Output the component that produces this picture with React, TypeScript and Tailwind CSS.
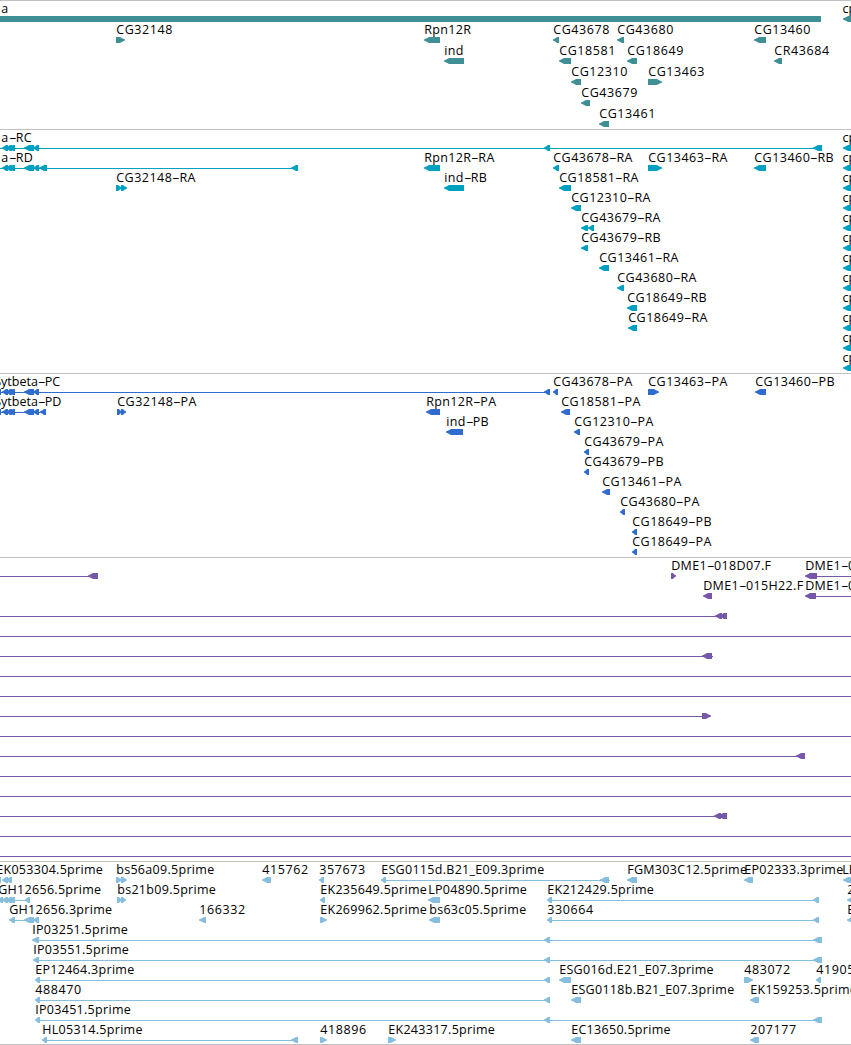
import React from "react";

type Kind = "left" | "right" | "line" | "bar";
type Glyph = [Kind, number, number];
type Feature = { name?: string; x?: number; glyphs: Glyph[] };
type TrackData = {
    id: string;
    color: string;
    rowClass: string;
    padClass: string;
    rows: Feature[][];
};

const left = (name: string, x: number, end: number): Feature => ({
    name,
    x,
    glyphs: [["left", x, end]],
});

const right = (name: string, x: number, end: number): Feature => ({
    name,
    x,
    glyphs: [["right", x, end]],
});

const parts = (name: string, x: number, ...glyphs: Glyph[]): Feature => ({
    name,
    x,
    glyphs,
});

const shapes = (...glyphs: Glyph[]): Feature => ({ glyphs });

const cp = parts("cp", 842.4, ["left", 843, 854]);
const fullLine = shapes(["line", 0, 851]);

// exons shared by the transcripts at the left edge
const exons: Glyph[] = [
    ["left", 2, 8],
    ["left", 6, 12],
    ["left", 9, 15],
    ["left", 24, 34],
    ["left", 33, 39],
];

const tracks: TrackData[] = [
    {
        id: "gene",
        color: "text-[#3f8f95]",
        rowClass: "h-[21px]",
        padClass: "pb-[2px]",
        rows: [
            [parts("a", 1, ["bar", 0, 821]), cp],
            [
                right("CG32148", 116, 125),
                left("Rpn12R", 424, 440),
                left("CG43678", 553, 559),
                left("CG43680", 617, 624),
                left("CG13460", 754, 766),
            ],
            [
                left("ind", 444, 464),
                left("CG18581", 559, 571),
                left("CG18649", 627, 637),
                left("CR43684", 774, 782),
            ],
            [left("CG12310", 571, 581), right("CG13463", 648, 662)],
            [left("CG43679", 581, 590)],
            [left("CG13461", 599, 609)],
        ],
    },
    {
        id: "mrna",
        color: "text-[#00a0c0]",
        rowClass: "h-5",
        padClass: "pb-[3px]",
        rows: [
            [
                parts("a-RC", 1, ["line", 0, 816], ...exons, ["left", 544, 550], ["left", 813, 822]),
                cp,
            ],
            [
                parts("a-RD", 1, ["line", 0, 293], ...exons, ["left", 39, 47], ["left", 291, 298]),
                left("Rpn12R-RA", 424, 440),
                left("CG43678-RA", 553, 559),
                right("CG13463-RA", 648, 662),
                left("CG13460-RB", 754, 766),
                cp,
            ],
            [
                parts("CG32148-RA", 116, ["right", 116, 122], ["right", 121, 127]),
                left("ind-RB", 444, 464),
                left("CG18581-RA", 559, 571),
                cp,
            ],
            [left("CG12310-RA", 571, 581), cp],
            [parts("CG43679-RA", 581, ["left", 581, 588], ["left", 588, 594]), cp],
            [left("CG43679-RB", 581, 588), cp],
            [left("CG13461-RA", 599, 609), cp],
            [left("CG43680-RA", 617, 624), cp],
            [left("CG18649-RB", 627, 637), cp],
            [left("CG18649-RA", 628, 637), cp],
            [cp],
            [cp],
        ],
    },
    {
        id: "cds",
        color: "text-[#306ccf]",
        rowClass: "h-5",
        padClass: "pb-[3px]",
        rows: [
            [
                parts("Sytbeta-PC", -6, ["line", 0, 547], ["left", -5, 1], ...exons, ["left", 544, 550]),
                left("CG43678-PA", 553, 558),
                right("CG13463-PA", 648, 659),
                left("CG13460-PB", 755, 766),
            ],
            [
                parts("Sytbeta-PD", -6, ["line", 0, 43], ["left", -5, 1], ...exons, ["left", 40, 46]),
                parts("CG32148-PA", 117, ["right", 117, 122], ["right", 121, 126]),
                left("Rpn12R-PA", 426, 440),
                left("CG18581-PA", 561, 570),
            ],
            [left("ind-PB", 446, 463), left("CG12310-PA", 574, 580)],
            [left("CG43679-PA", 584, 589)],
            [left("CG43679-PB", 584, 589)],
            [left("CG13461-PA", 602, 610)],
            [left("CG43680-PA", 620, 625)],
            [left("CG18649-PB", 632, 637)],
            [left("CG18649-PA", 632, 637)],
        ],
    },
    {
        id: "bac",
        color: "text-[#7757a8]",
        rowClass: "h-5",
        padClass: "pb-[3px]",
        rows: [
            [
                shapes(["line", 0, 92], ["left", 88, 98]),
                right("DME1-018D07.F", 671, 676),
                parts("DME1-01", 805, ["left", 805, 817], ["line", 816, 851]),
            ],
            [
                left("DME1-015H22.F", 703, 712),
                parts("DME1-01", 805, ["left", 805, 816], ["line", 815, 851]),
            ],
            [shapes(["line", 0, 720], ["left", 715, 722], ["left", 719, 727])],
            [fullLine],
            [shapes(["line", 0, 713], ["left", 702, 712])],
            [fullLine],
            [fullLine],
            [shapes(["line", 0, 703], ["right", 702, 711])],
            [fullLine],
            [shapes(["line", 0, 799], ["left", 796, 805])],
            [fullLine],
            [fullLine],
            [shapes(["line", 0, 720], ["left", 714, 721], ["left", 718, 727])],
            [fullLine],
            [fullLine],
        ],
    },
    {
        id: "est",
        color: "text-[#87bddd]",
        rowClass: "h-5",
        padClass: "pb-[2px]",
        rows: [
            [
                parts("EK053304.5prime", -4, ["left", -4, 1], ["left", 2, 8], ["left", 6, 12]),
                parts("bs56a09.5prime", 116, ["right", 116, 122], ["right", 121, 127]),
                left("415762", 262, 271),
                left("357673", 319, 324),
                parts("ESG0115d.B21_E09.3prime", 381, ["left", 381, 386], ["line", 385, 610], ["left", 600, 609]),
                left("FGM303C12.5prime", 627, 637),
                left("EP02333.3prime", 744, 753),
                parts("LP", 842, ["left", 843, 854]),
            ],
            [
                parts(
                    "GH12656.5prime",
                    -2,
                    ["line", 0, 28],
                    ["left", -2, 3],
                    ["left", 2, 8],
                    ["left", 6, 12],
                    ["left", 9, 15],
                    ["left", 25, 30]
                ),
                parts("bs21b09.5prime", 117, ["right", 117, 122], ["right", 121, 126]),
                left("EK235649.5prime", 320, 325),
                left("LP04890.5prime", 428, 440),
                parts("EK212429.5prime", 547, ["left", 547, 552], ["line", 550, 816], ["left", 813, 819]),
                left("2", 847, 856),
            ],
            [
                parts("GH12656.3prime", 9, ["left", 9, 15], ["line", 14, 36], ["left", 24, 34], ["left", 33, 39]),
                left("166332", 199, 206),
                right("EK269962.5prime", 320, 327),
                left("bs63c05.5prime", 429, 440),
                parts("330664", 547, ["left", 547, 552], ["line", 550, 816], ["left", 813, 819]),
                left("E", 847, 856),
            ],
            [parts("IP03251.5prime", 32, ["left", 32, 39], ["line", 38, 816], ["left", 544, 550], ["left", 813, 822])],
            [parts("IP03551.5prime", 33, ["left", 33, 39], ["line", 38, 816], ["left", 544, 550], ["left", 813, 822])],
            [
                parts("EP12464.3prime", 35, ["left", 35, 40], ["line", 39, 547], ["left", 544, 550]),
                left("ESG016d.E21_E07.3prime", 559, 571),
                right("483072", 744, 753),
                left("419053", 816, 821),
            ],
            [
                parts("488470", 35, ["left", 35, 40], ["line", 39, 547], ["left", 544, 550]),
                left("ESG0118b.B21_E07.3prime", 571, 581),
                left("EK159253.5prime", 750, 759),
            ],
            [parts("IP03451.5prime", 35, ["left", 35, 40], ["line", 39, 816], ["left", 544, 550], ["left", 813, 822])],
            [
                parts("HL05314.5prime", 42, ["left", 42, 47], ["line", 46, 293], ["left", 291, 298]),
                right("418896", 320, 327),
                right("EK243317.5prime", 388, 396),
                left("EC13650.5prime", 571, 581),
                left("207177", 750, 759),
            ],
        ],
    },
];

const GlyphShape = ({ glyph }: { glyph: Glyph }) => {
    const [kind, start, end] = glyph;
    const head = Math.min(end - start, 7);

    if (kind === "line") {
        return <rect x={start} y={3} width={end - start} height={1} />;
    }
    if (kind === "bar") {
        return <rect x={start} y={0} width={end - start} height={6} />;
    }

    // the head is convex: thin tip, quickly full height
    const tip = kind === "left" ? start : end;
    const back = kind === "left" ? end : start;
    const dir = kind === "left" ? 1 : -1;
    const mid = tip + dir * head * 0.4;
    const neck = tip + dir * (head - 2);

    return (
        <polygon
            points={`${back},0 ${neck},0 ${mid},1.2 ${tip},2.5 ${tip},3.5 ${mid},4.8 ${neck},6 ${back},6`}
        />
    );
};

const trackingFor = (name: string) => {
    if (name === "cp") return "tracking-[-0.2px]";
    if (name.startsWith("Syt") || name === "LP") return "tracking-[0px]";
    if (name.startsWith("DME") || name.startsWith("Rpn") || name.startsWith("ind")) return "tracking-[0.35px]";
    if (name.endsWith("prime")) return "tracking-[0.3px]";
    if (name.includes("-")) return "tracking-[0.5px]";
    return "tracking-[0.6px]";
};

const Label = ({ name, x }: { name: string; x: number }) => (
    <span
        className={`absolute -top-px whitespace-pre text-black ${trackingFor(name)}`}
        style={{ left: x + 0.2 }}
    >
        {name.split("-").map((part, i) => (
            <React.Fragment key={i}>
                {i > 0 && (
                    <span className="inline-block w-[7px] origin-left scale-x-[1.9]">-</span>
                )}
                {part}
            </React.Fragment>
        ))}
    </span>
);

const Track = ({ track }: { track: TrackData }) => (
    <section className={`border-t border-[#c0c0c0] ${track.color} ${track.padClass}`}>
        {track.rows.map((row, i) => (
            <div key={i} className={`relative w-full ${track.rowClass}`}>
                <svg
                    className="absolute left-0 top-[15px] h-[6px] w-[851px] overflow-hidden"
                    fill="currentColor"
                >
                    {row.flatMap((feature, f) =>
                        feature.glyphs.map((glyph, g) => (
                            <GlyphShape key={`${f}-${g}`} glyph={glyph} />
                        ))
                    )}
                </svg>
                {row.map(
                    (feature, f) =>
                        feature.name && (
                            <Label key={f} name={feature.name} x={feature.x ?? 0} />
                        )
                )}
            </div>
        ))}
    </section>
);

const App = () => {
    return (
        <div className="w-[851px] h-[1045px] overflow-hidden border-b border-[#c0c0c0] bg-white font-['Open_Sans','Noto_Sans',sans-serif] text-[12.5px] leading-[18px]">
            {tracks.map((track) => (
                <Track key={track.id} track={track} />
            ))}
        </div>
    );
};

export default App;
